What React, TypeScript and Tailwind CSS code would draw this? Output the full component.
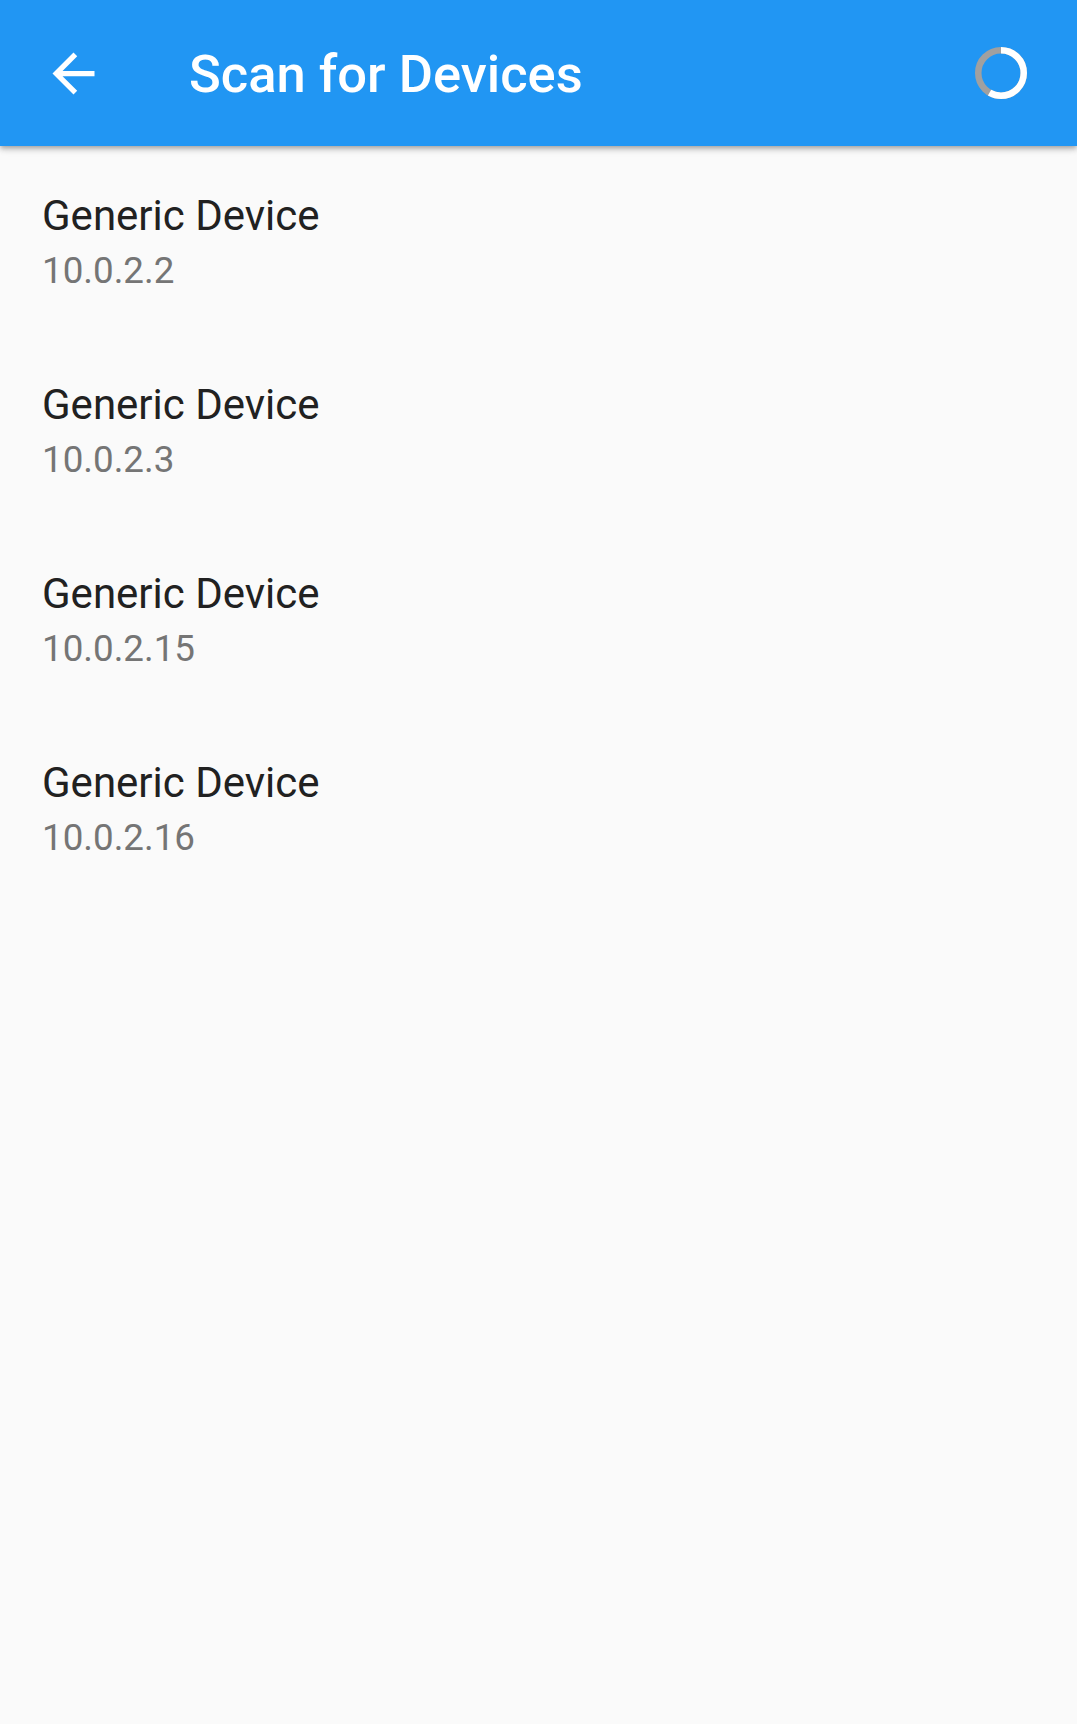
import React from "react";

const devices = ["10.0.2.2", "10.0.2.3", "10.0.2.15", "10.0.2.16"];

function Spinner() {
  // ring with white arc from 12 o'clock clockwise, grey rest
  const r = 22.75;
  const c = 2 * Math.PI * r;
  const white = c * (209 / 360);
  return (
    <svg width="56" height="56" viewBox="0 0 56 56">
      <circle cx="28" cy="28" r={r} fill="none" stroke="#a0a0a0" strokeWidth="6.5" />
      <circle
        cx="28"
        cy="28"
        r={r}
        fill="none"
        stroke="#ffffff"
        strokeWidth="6.5"
        strokeDasharray={`${white} ${c}`}
        transform="rotate(-90 28 28)"
      />
    </svg>
  );
}

export default function App() {
  return (
    <div className="w-[1077px] h-[1724px] bg-[#fafafa] font-['Roboto',sans-serif] overflow-hidden">
      <header className="relative z-10 flex items-center h-[146px] bg-[#2196f3] shadow-[0_2px_4px_-1px_rgba(0,0,0,0.2),0_4px_5px_0_rgba(0,0,0,0.14),0_1px_10px_0_rgba(0,0,0,0.12)]">
        <div className="ml-[42px] w-[63px] h-[63px] flex items-center justify-center">
          <svg width="63" height="63" viewBox="0 0 24 24" fill="#ffffff">
            <path d="M20 11H7.83l5.59-5.59L12 4l-8 8 8 8 1.41-1.41L7.83 13H20v-2z" />
          </svg>
        </div>
        <h1 className="ml-[84px] pt-[2px] text-[52.5px] font-medium text-white leading-normal">
          Scan for Devices
        </h1>
        <div className="ml-auto mr-[48px] mt-[-1px] flex items-center justify-center">
          <Spinner />
        </div>
      </header>

      <ul>
        {devices.map((ip) => (
          <li key={ip} className="h-[189px] pt-[42px] px-[42px] flex flex-col">
            <span className="text-[42px] leading-[56px] text-[#212121]">Generic Device</span>
            <span className="text-[36.75px] leading-[54px] text-[#757575]">{ip}</span>
          </li>
        ))}
      </ul>
    </div>
  );
}
